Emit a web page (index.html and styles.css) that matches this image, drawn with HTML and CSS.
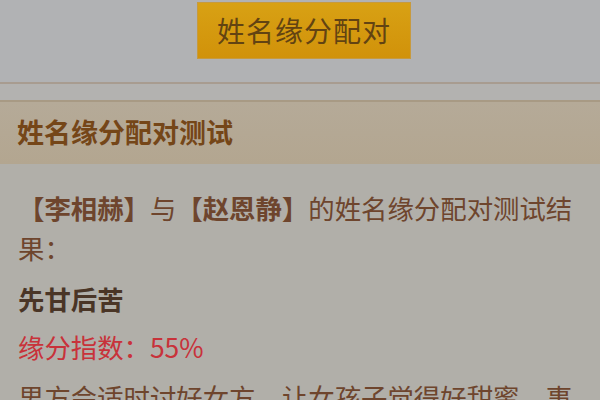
FILE: index.html
```html
<!DOCTYPE html>
<html lang="zh-CN">
<head>
<meta charset="utf-8">
<title>姓名缘分配对</title>
<link rel="stylesheet" href="styles.css">
</head>
<body>
  <div class="top">
    <button class="btn">姓名缘分配对</button>
  </div>
  <div class="band"></div>
  <div class="panel-head">姓名缘分配对测试</div>
  <div class="content">
    <p class="result"><b>【李相赫】</b>与<b>【赵恩静】</b>的姓名缘分配对测试结果：</p>
    <p class="verdict">先甘后苦</p>
    <p class="score">缘分指数：55%</p>
    <p class="desc">男方会适时讨好女方，让女孩子觉得好甜蜜，事后女方也会觉得这段感情很值得。</p>
  </div>
</body>
</html>
```

FILE: styles.css
```css
html, body {
  margin: 0;
  padding: 0;
}
body {
  width: 600px;
  height: 400px;
  overflow: hidden;
  background: #b1afa9;
  font-family: "Noto Sans CJK SC", "Noto Sans", sans-serif;
}
.top {
  background: #b1b2b4;
  display: flex;
  justify-content: center;
  align-items: flex-start;
  padding-top: 2px;
  border-bottom: 2px solid #a89c90;
  box-sizing: border-box;
  height: 84px;
}
.btn {
  margin-left: 8px;
  width: 214px;
  height: 57px;
  border: 1px solid #c79a3e;
  background: linear-gradient(#d8a114, #d1920a);
  color: #624312;
  font-family: inherit;
  font-size: 28px;
  letter-spacing: 1px;
  padding: 0;
  line-height: 55px;
}
.band {
  height: 16px;
  background: #b3b2b0;
  border-bottom: 2px solid #a89a84;
}
.panel-head {
  height: 62px;
  box-sizing: border-box;
  padding-left: 17px;
  background: linear-gradient(#b5aa98, #b3a690);
  color: #754618;
  font-size: 27px;
  font-weight: bold;
  line-height: 60px;
}
.content {
  padding: 24px 18px 0 18px;
  color: #6e452d;
  font-size: 26.4px;
  line-height: 40px;
}
.content p {
  margin: 0;
}
.result b {
  font-weight: bold;
}
.verdict {
  margin-top: 11px !important;
  color: #4a3526;
  font-weight: bold;
}
.score {
  margin-top: 8px !important;
  color: #c8323a;
}
.desc {
  margin-top: 10px !important;
}
```
